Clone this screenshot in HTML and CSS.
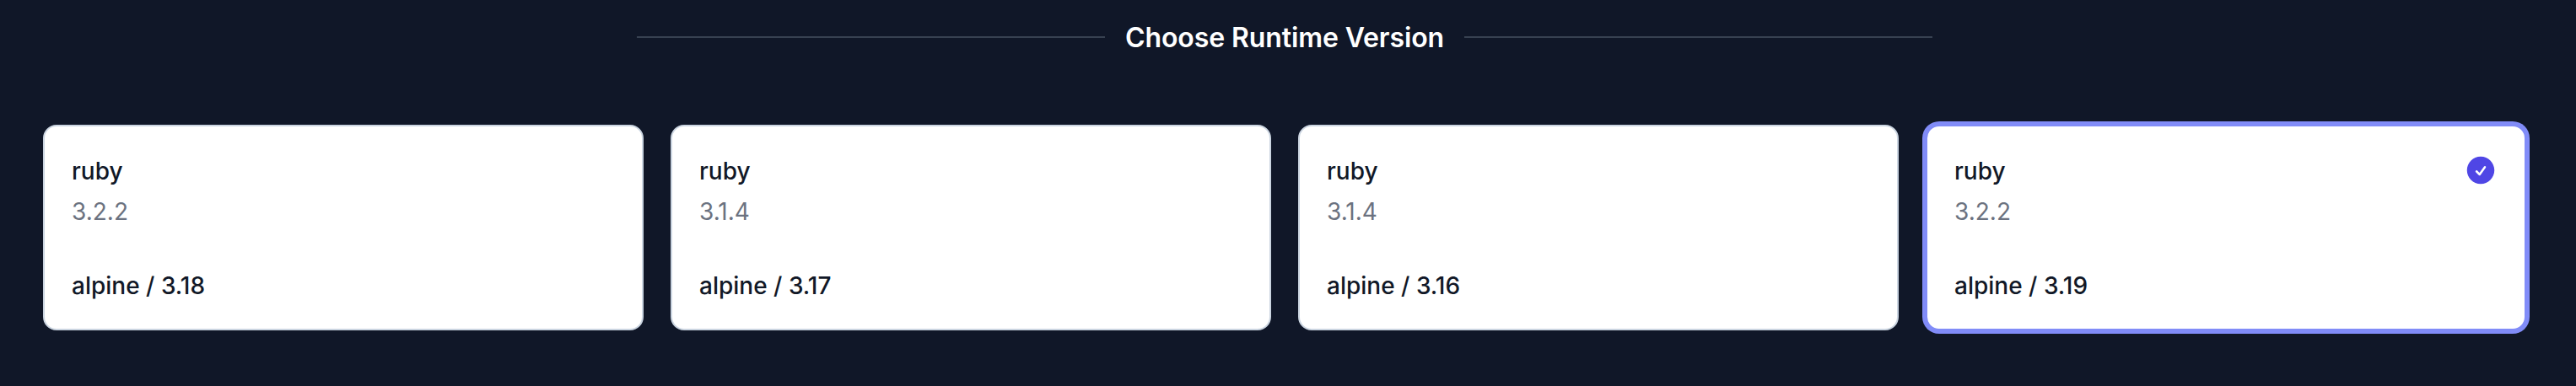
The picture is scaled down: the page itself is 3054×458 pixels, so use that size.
FILE: index.html
```html
<!DOCTYPE html>
<html lang="en">
<head>
<meta charset="utf-8">
<title>Choose Runtime Version</title>
<link rel="stylesheet" href="styles.css">
</head>
<body>
<main class="page">
  <div class="divider">
    <span class="divider-line"></span>
    <h1 class="divider-title">Choose Runtime Version</h1>
    <span class="divider-line"></span>
  </div>
  <div class="cards">
    <div class="card">
      <div class="card-body">
        <span class="card-name">ruby</span>
        <span class="card-version">3.2.2</span>
        <span class="card-os">alpine / 3.18</span>
      </div>
    </div>
    <div class="card">
      <div class="card-body">
        <span class="card-name">ruby</span>
        <span class="card-version">3.1.4</span>
        <span class="card-os">alpine / 3.17</span>
      </div>
    </div>
    <div class="card">
      <div class="card-body">
        <span class="card-name">ruby</span>
        <span class="card-version">3.1.4</span>
        <span class="card-os">alpine / 3.16</span>
      </div>
    </div>
    <div class="card card-selected">
      <div class="card-body">
        <span class="card-name">ruby</span>
        <span class="card-version">3.2.2</span>
        <span class="card-os">alpine / 3.19</span>
      </div>
      <svg class="card-check" viewBox="0 0 24 24" fill="currentColor" aria-hidden="true">
        <path fill-rule="evenodd" d="M2.25 12c0-5.385 4.365-9.75 9.75-9.75s9.75 4.365 9.75 9.75-4.365 9.75-9.75 9.75S2.25 17.385 2.25 12zm13.36-1.814a.75.75 0 10-1.22-.872l-3.236 4.53L9.53 12.22a.75.75 0 00-1.06 1.06l2.25 2.25a.75.75 0 001.14-.094l3.75-5.25z" clip-rule="evenodd"/>
      </svg>
    </div>
  </div>
</main>
</body>
</html>
```
FILE: styles.css
```css
* {
  box-sizing: border-box;
}

body {
  margin: 0;
  background: #101728;
  font-family: Inter, "Liberation Sans", sans-serif;
}

.page {
  height: 458px;
  padding: 20px 59px 0 51px;
  overflow: hidden;
}

.divider {
  display: flex;
  align-items: center;
  width: 1536px;
  margin: 0 auto 80px 704px;
}

.divider-line {
  flex: 1;
  height: 2px;
  background: #374151;
}

.divider-title {
  margin: 0;
  padding: 2px 24px 0;
  color: #fff;
  font-size: 32px;
  font-weight: 600;
  line-height: 46px;
  letter-spacing: -0.1px;
}

.cards {
  display: grid;
  grid-template-columns: repeat(4, 1fr);
  gap: 32px;
}

.card {
  display: flex;
  padding: 32px;
  border: 2px solid #cbd5e1;
  border-radius: 16px;
  background: #fff;
}

.card-selected {
  border-color: #818cf8;
  box-shadow: 0 0 0 4px #818cf8;
}

.card-body {
  display: flex;
  flex: 1;
  flex-direction: column;
  margin-bottom: -1px;
  padding-top: 1px;
  font-size: 28px;
  line-height: 40px;
}

.card-name,
.card-os {
  color: #111827;
  font-weight: 500;
}

.card-version {
  margin-top: 8px;
  color: #6b7280;
}

.card-os {
  margin-top: 48px;
}

.card-check {
  width: 40px;
  height: 40px;
  color: #4f46e5;
}
```
